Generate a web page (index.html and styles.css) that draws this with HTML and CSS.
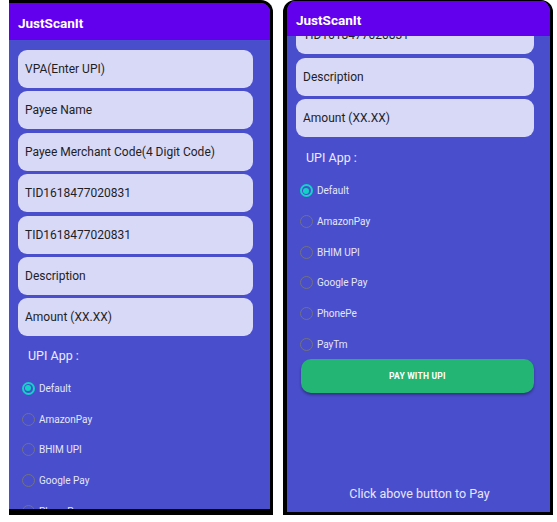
FILE: index.html
```html
<!DOCTYPE html>
<html lang="en">
<head>
<meta charset="utf-8">
<title>JustScanIt</title>
<link rel="stylesheet" href="styles.css">
</head>
<body>
<div class="stage">
  <div class="phone phone-left">
    <div class="appbar">JustScanIt</div>
    <div class="content">
      <div class="scroll">
        <div class="field">VPA(Enter UPI)</div>
        <div class="field">Payee Name</div>
        <div class="field">Payee Merchant Code(4 Digit Code)</div>
        <div class="field">TID1618477020831</div>
        <div class="field">TID1618477020831</div>
        <div class="field">Description</div>
        <div class="field">Amount (XX.XX)</div>
        <div class="section-label">UPI App :</div>
        <div class="radios">
          <div class="radio-row"><span class="radio checked"></span><span class="radio-label">Default</span></div>
          <div class="radio-row"><span class="radio"></span><span class="radio-label">AmazonPay</span></div>
          <div class="radio-row"><span class="radio"></span><span class="radio-label">BHIM UPI</span></div>
          <div class="radio-row"><span class="radio"></span><span class="radio-label">Google Pay</span></div>
          <div class="radio-row"><span class="radio"></span><span class="radio-label">PhonePe</span></div>
          <div class="radio-row"><span class="radio"></span><span class="radio-label">PayTm</span></div>
        </div>
      </div>
    </div>
  </div>
  <div class="phone phone-right">
    <div class="appbar">JustScanIt</div>
    <div class="content">
      <div class="scroll scrolled">
        <div class="field">VPA(Enter UPI)</div>
        <div class="field">Payee Name</div>
        <div class="field">Payee Merchant Code(4 Digit Code)</div>
        <div class="field">TID1618477020831</div>
        <div class="field">TID1618477020831</div>
        <div class="field">Description</div>
        <div class="field">Amount (XX.XX)</div>
        <div class="section-label">UPI App :</div>
        <div class="radios">
          <div class="radio-row"><span class="radio checked"></span><span class="radio-label">Default</span></div>
          <div class="radio-row"><span class="radio"></span><span class="radio-label">AmazonPay</span></div>
          <div class="radio-row"><span class="radio"></span><span class="radio-label">BHIM UPI</span></div>
          <div class="radio-row"><span class="radio"></span><span class="radio-label">Google Pay</span></div>
          <div class="radio-row"><span class="radio"></span><span class="radio-label">PhonePe</span></div>
          <div class="radio-row"><span class="radio"></span><span class="radio-label">PayTm</span></div>
        </div>
        <button class="pay-btn">PAY WITH UPI</button>
      </div>
      <div class="hint">Click above button to Pay</div>
    </div>
  </div>
</div>
</body>
</html>
```

FILE: styles.css
```css
* { box-sizing: border-box; }

html, body {
  margin: 0;
  padding: 0;
  background: #ffffff;
  font-family: Roboto, "Liberation Sans", Arial, sans-serif;
}

.stage {
  display: flex;
  align-items: flex-start;
  gap: 10px;
  padding-left: 9px;
  width: 557px;
  height: 522px;
}

.phone {
  display: flex;
  flex-direction: column;
  overflow: hidden;
  background: #494ecd;
  border-style: solid;
  border-color: #000;
}

.phone-left {
  width: 264px;
  height: 515px;
  border-width: 3px 3px 6px 0;
  border-top-right-radius: 12px;
}

.phone-right {
  width: 270px;
  height: 515px;
  border-width: 1px 3px 3px 4px;
  border-top-left-radius: 12px;
  border-top-right-radius: 12px;
}

.appbar {
  flex-shrink: 0;
  height: 37px;
  background: #6200ee;
  color: #ffffff;
  font-weight: 700;
  font-size: 13.5px;
  padding-left: 9px;
  display: flex;
  align-items: center;
  padding-top: 2px;
  position: relative;
  z-index: 1;
}

.phone-right .appbar {
  height: 35px;
}

.content {
  flex: 1;
  display: flex;
  flex-direction: column;
  overflow: hidden;
}

.scroll {
  flex-shrink: 0;
  display: flex;
  flex-direction: column;
  gap: 3.4px;
  padding: 10px 17px 0 9px;
}

.phone-right .scroll {
  padding-right: 16px;
}

.scrolled {
  margin-top: -195.3px;
}

.field {
  flex-shrink: 0;
  height: 38px;
  border-radius: 9px;
  background: #d8d8f7;
  color: #1e1e24;
  font-size: 12px;
  display: flex;
  align-items: center;
  padding-left: 7px;
}

.section-label {
  flex-shrink: 0;
  margin-top: 8px;
  padding-left: 10px;
  color: #eceaff;
  font-size: 12.5px;
  line-height: 16px;
}

.phone-right .section-label {
  margin-top: 9.5px;
}

.radios {
  display: flex;
  flex-direction: column;
  margin-top: 6px;
}

.radio-row {
  flex-shrink: 0;
  height: 30.7px;
  display: flex;
  align-items: center;
  padding-left: 3.5px;
  gap: 4.5px;
}

.radio {
  width: 13px;
  height: 13px;
  border-radius: 50%;
  border: 1.8px solid #737378;
  flex-shrink: 0;
  display: flex;
  align-items: center;
  justify-content: center;
}

.radio.checked {
  border: 2px solid #11d3c6;
}

.radio.checked::after {
  content: "";
  width: 6px;
  height: 6px;
  border-radius: 50%;
  background: #11d3c6;
}

.radio-label {
  color: #e6e6f6;
  font-size: 10px;
}

.pay-btn {
  flex-shrink: 0;
  margin: -3.4px 0 0 4.7px;
  height: 33.4px;
  border: none;
  border-radius: 10px;
  background: #22b573;
  color: #ffffff;
  font-family: Roboto, "Liberation Sans", Arial, sans-serif;
  font-weight: 700;
  font-size: 8.5px;
  letter-spacing: 0.2px;
  box-shadow: 0 2px 3px rgba(0, 0, 0, 0.35);
}

.hint {
  flex-shrink: 0;
  margin-top: auto;
  margin-bottom: 10px;
  text-align: center;
  color: #e6e6fb;
  font-size: 12.5px;
  line-height: 16px;
  padding-left: 2px;
}
```
